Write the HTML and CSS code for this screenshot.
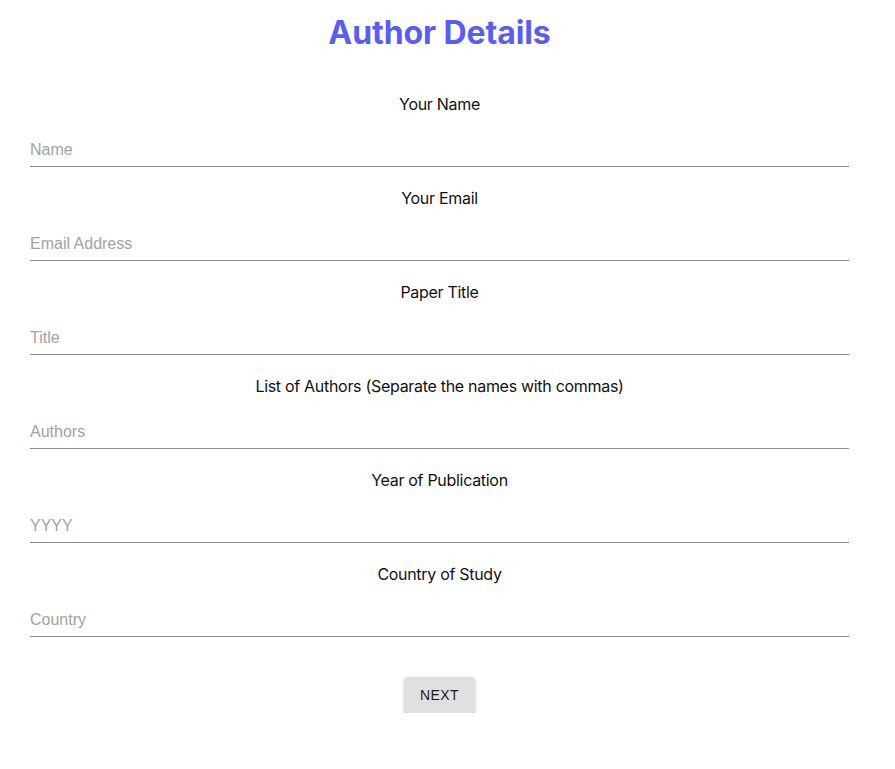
FILE: index.html
```html
<!DOCTYPE html>
<html>
<head>
<meta charset="utf-8">
<link rel="stylesheet" href="styles.css">
</head>
<body>
<div class="page">
  <h1 class="title">Author Details</h1>
  <form class="form">
    <div class="field">
      <label class="label">Your Name</label>
      <input class="input" type="text" placeholder="Name">
    </div>
    <div class="field">
      <label class="label">Your Email</label>
      <input class="input" type="text" placeholder="Email Address">
    </div>
    <div class="field">
      <label class="label">Paper Title</label>
      <input class="input" type="text" placeholder="Title">
    </div>
    <div class="field">
      <label class="label">List of Authors (Separate the names with commas)</label>
      <input class="input" type="text" placeholder="Authors">
    </div>
    <div class="field">
      <label class="label">Year of Publication</label>
      <input class="input" type="text" placeholder="YYYY">
    </div>
    <div class="field">
      <label class="label">Country of Study</label>
      <input class="input" type="text" placeholder="Country">
    </div>
    <div class="actions">
      <button class="btn" type="button">NEXT</button>
    </div>
  </form>
</div>
</body>
</html>
```
FILE: styles.css
```css
html, body {
  margin: 0;
  padding: 0;
  background: #ffffff;
}
.page {
  width: 819px;
  margin-left: 30px;
  font-family: Inter, "Noto Sans", sans-serif;
}
.title {
  margin: 0;
  padding-top: 14px;
  height: 68px;
  box-sizing: border-box;
  text-align: center;
  font-family: Inter, sans-serif;
  font-weight: 700;
  font-size: 32px;
  line-height: 38px;
  color: #5a5cf6;
  letter-spacing: -0.1px;
}
.form {
  display: flex;
  flex-direction: column;
}
.field {
  display: flex;
  flex-direction: column;
  height: 94px;
}
.label {
  display: block;
  text-align: center;
  font-size: 16px;
  line-height: 22px;
  color: #111;
  padding-top: 25px;
  letter-spacing: -0.3px;
}
.input {
  margin-top: 26px;
  border: none;
  border-bottom: 1px solid #8c8c8c;
  outline: none;
  padding: 0 0 7px 0;
  height: 24px;
  font-family: "Liberation Sans", Arial, sans-serif;
  font-size: 16px;
  color: #222;
  background: transparent;
}
.input::placeholder {
  color: #a2a2a2;
}
.actions {
  display: flex;
  justify-content: center;
  padding-top: 45px;
}
.btn {
  width: 71px;
  height: 36px;
  border: none;
  border-radius: 4px;
  background: #e0e0e0;
  font-family: "Liberation Sans", Arial, sans-serif;
  font-size: 14px;
  color: #1a1a1a;
  letter-spacing: 0.4px;
  box-shadow: 0 3px 1px -2px rgba(0,0,0,0.2), 0 2px 2px 0 rgba(0,0,0,0.14), 0 1px 5px 0 rgba(0,0,0,0.12);
}
```
